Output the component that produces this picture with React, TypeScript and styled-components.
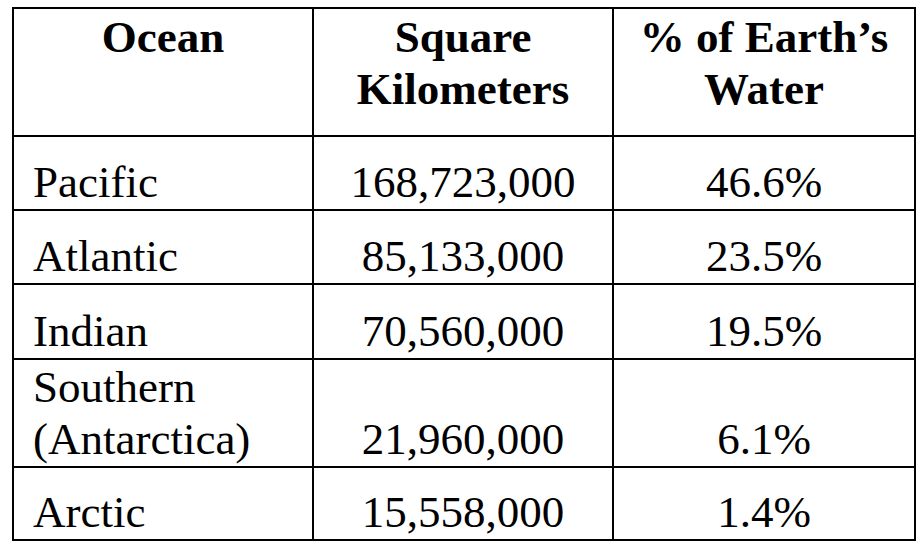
import React from "react";
import styled, { createGlobalStyle } from "styled-components";

interface OceanRow {
  name: string[];
  area: string;
  share: string;
  height: number;
}

const rows: OceanRow[] = [
  { name: ["Pacific"], area: "168,723,000", share: "46.6%", height: 74 },
  { name: ["Atlantic"], area: "85,133,000", share: "23.5%", height: 74 },
  { name: ["Indian"], area: "70,560,000", share: "19.5%", height: 75 },
  { name: ["Southern", "(Antarctica)"], area: "21,960,000", share: "6.1%", height: 108 },
  { name: ["Arctic"], area: "15,558,000", share: "1.4%", height: 73 },
];

const GlobalStyle = createGlobalStyle`
  html, body {
    margin: 0;
    padding: 0;
    background: #ffffff;
  }
  body {
    font-family: "Liberation Serif", "Times New Roman", serif;
    color: #000000;
  }
`;

const Page = styled.div`
  padding: 7px 0 0 12px;
`;

const Table = styled.table`
  border-collapse: collapse;
  table-layout: fixed;
  width: 902px;
  font-family: "Liberation Serif", "Times New Roman", serif;
  font-size: 45px;
  line-height: normal;
  color: #000;
`;

const Row = styled.tr<{ $height: number }>`
  height: ${(p) => p.$height}px;
`;

const HeadCell = styled.th`
  border: 2px solid #000;
  font-weight: bold;
  text-align: center;
  vertical-align: top;
  padding: 2px 0 0;
`;

const Cell = styled.td<{ $align?: "left" | "center" }>`
  border: 2px solid #000;
  text-align: ${(p) => p.$align ?? "center"};
  vertical-align: bottom;
  padding: 0 0 1px ${(p) => (p.$align === "left" ? "19px" : "0")};
  white-space: nowrap;
`;

const Line = styled.div``;

const App: React.FC = () => {
  return (
    <>
      <GlobalStyle />
      <Page>
        <Table>
          <colgroup>
            <col style={{ width: 300 }} />
            <col style={{ width: 300 }} />
            <col style={{ width: 302 }} />
          </colgroup>
          <thead>
            <Row $height={128}>
              <HeadCell>Ocean</HeadCell>
              <HeadCell>
                <Line>Square</Line>
                <Line>Kilometers</Line>
              </HeadCell>
              <HeadCell>
                <Line>% of Earth’s</Line>
                <Line>Water</Line>
              </HeadCell>
            </Row>
          </thead>
          <tbody>
            {rows.map((r) => (
              <Row key={r.name.join(" ")} $height={r.height}>
                <Cell $align="left">
                  {r.name.map((n) => (
                    <Line key={n}>{n}</Line>
                  ))}
                </Cell>
                <Cell>{r.area}</Cell>
                <Cell>{r.share}</Cell>
              </Row>
            ))}
          </tbody>
        </Table>
      </Page>
    </>
  );
};

export default App;
